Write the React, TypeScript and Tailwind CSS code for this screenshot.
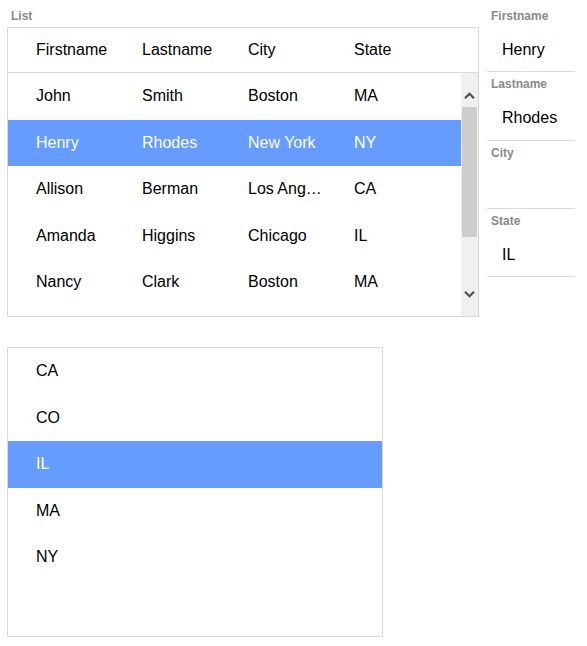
import React from "react";

const rows = [
  ["John", "Smith", "Boston", "MA"],
  ["Henry", "Rhodes", "New York", "NY"],
  ["Allison", "Berman", "Los Angeles", "CA"],
  ["Amanda", "Higgins", "Chicago", "IL"],
  ["Nancy", "Clark", "Boston", "MA"],
];

const states = ["CA", "CO", "IL", "MA", "NY"];

function Chevron({ up }: { up?: boolean }) {
  return (
    <svg width="11" height="7" viewBox="0 0 11 7" className="block mx-auto">
      <path
        d={up ? "M1 6.2 L5.5 1.7 L10 6.2" : "M1 0.8 L5.5 5.3 L10 0.8"}
        fill="none"
        stroke="#4f4f4f"
        strokeWidth="2.2"
      />
    </svg>
  );
}

function Field({ label, value }: { label: string; value?: string }) {
  return (
    <div className="h-[68.33px] border-b border-[#dcdcdc]">
      <div className="pl-[4px] pt-[5px] text-[12px] leading-[14px] font-bold text-[#8a8a8a]">
        {label}
      </div>
      <div className="pl-[15px] pt-[18px] text-[16px] leading-[18px] text-black">
        {value ?? "\u00a0"}
      </div>
    </div>
  );
}

export default function App() {
  return (
    <div
      className="w-[587px] h-[646px] bg-white pl-[7px]"
      style={{ fontFamily: '"Liberation Sans", Arial, sans-serif' }}
    >
      <div className="flex gap-[8px]">
        <div className="w-[472px]">
          <div className="h-[27px] pl-[4px] pt-[9px] text-[12px] leading-[14px] font-bold text-[#8a8a8a]">
            List
          </div>
          <div className="h-[290px] border border-[#d9d9d9] flex flex-col overflow-hidden">
            <div className="flex h-[45px] shrink-0 items-center border-b border-[#d9d9d9] text-[16px] text-black">
              {["Firstname", "Lastname", "City", "State"].map((h) => (
                <div key={h} className="w-[106px] pl-[28px] truncate">
                  {h}
                </div>
              ))}
            </div>
            <div className="flex flex-1 min-h-0">
              <div className="flex-1 overflow-hidden">
                {rows.map((r, i) => (
                  <div
                    key={i}
                    className={
                      "flex h-[46.5px] items-center text-[16px] " +
                      (i === 1 ? "bg-[#669cff] text-white" : "text-black")
                    }
                  >
                    {r.map((c, j) => (
                      <div key={j} className="w-[106px] pl-[28px] truncate">
                        {c}
                      </div>
                    ))}
                  </div>
                ))}
              </div>
              <div className="w-[17px] bg-[#f0f0f0] flex flex-col pt-[19px] pb-[18px]">
                <Chevron up />
                <div className="mt-[8px] h-[130px] mx-[1px] bg-[#cdcdcd]" />
                <div className="flex-1" />
                <Chevron />
              </div>
            </div>
          </div>
        </div>
        <div className="w-[88px] pt-[4px]">
          <Field label="Firstname" value="Henry" />
          <Field label="Lastname" value="Rhodes" />
          <Field label="City" />
          <Field label="State" value="IL" />
        </div>
      </div>
      <div className="mt-[30px] w-[376px] h-[290px] border border-[#d9d9d9] overflow-hidden">
        {states.map((s) => (
          <div
            key={s}
            className={
              "h-[46.5px] flex items-center pl-[28px] text-[16px] " +
              (s === "IL" ? "bg-[#669cff] text-white" : "text-black")
            }
          >
            {s}
          </div>
        ))}
      </div>
    </div>
  );
}
